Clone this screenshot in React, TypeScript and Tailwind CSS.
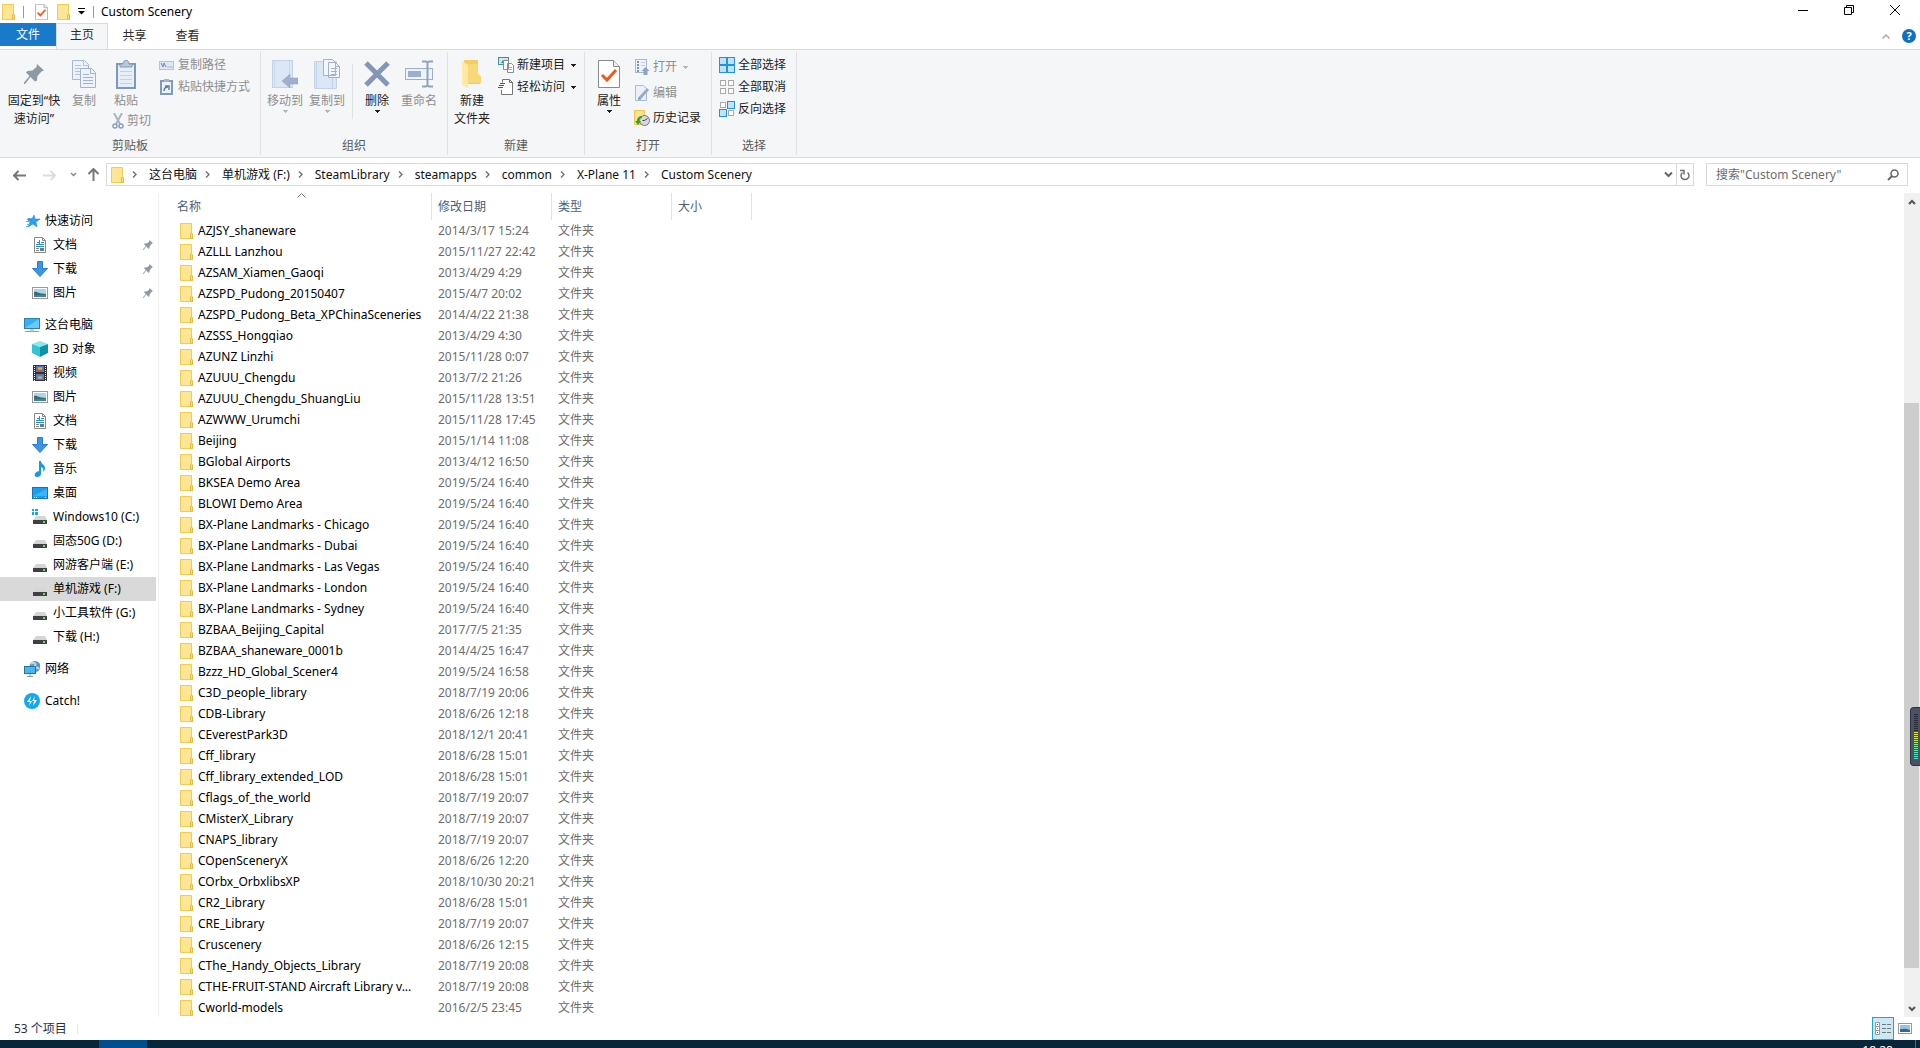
import React, { useState } from 'react';

type IconProps = { className?: string };

const rows: [string, string][] = [
  ['AZJSY_shaneware', '2014/3/17 15:24'],
  ['AZLLL Lanzhou', '2015/11/27 22:42'],
  ['AZSAM_Xiamen_Gaoqi', '2013/4/29 4:29'],
  ['AZSPD_Pudong_20150407', '2015/4/7 20:02'],
  ['AZSPD_Pudong_Beta_XPChinaSceneries', '2014/4/22 21:38'],
  ['AZSSS_Hongqiao', '2013/4/29 4:30'],
  ['AZUNZ Linzhi', '2015/11/28 0:07'],
  ['AZUUU_Chengdu', '2013/7/2 21:26'],
  ['AZUUU_Chengdu_ShuangLiu', '2015/11/28 13:51'],
  ['AZWWW_Urumchi', '2015/11/28 17:45'],
  ['Beijing', '2015/1/14 11:08'],
  ['BGlobal Airports', '2013/4/12 16:50'],
  ['BKSEA Demo Area', '2019/5/24 16:40'],
  ['BLOWI Demo Area', '2019/5/24 16:40'],
  ['BX-Plane Landmarks - Chicago', '2019/5/24 16:40'],
  ['BX-Plane Landmarks - Dubai', '2019/5/24 16:40'],
  ['BX-Plane Landmarks - Las Vegas', '2019/5/24 16:40'],
  ['BX-Plane Landmarks - London', '2019/5/24 16:40'],
  ['BX-Plane Landmarks - Sydney', '2019/5/24 16:40'],
  ['BZBAA_Beijing_Capital', '2017/7/5 21:35'],
  ['BZBAA_shaneware_0001b', '2014/4/25 16:47'],
  ['Bzzz_HD_Global_Scener4', '2019/5/24 16:58'],
  ['C3D_people_library', '2018/7/19 20:06'],
  ['CDB-Library', '2018/6/26 12:18'],
  ['CEverestPark3D', '2018/12/1 20:41'],
  ['Cff_library', '2018/6/28 15:01'],
  ['Cff_library_extended_LOD', '2018/6/28 15:01'],
  ['Cflags_of_the_world', '2018/7/19 20:07'],
  ['CMisterX_Library', '2018/7/19 20:07'],
  ['CNAPS_library', '2018/7/19 20:07'],
  ['COpenSceneryX', '2018/6/26 12:20'],
  ['COrbx_OrbxlibsXP', '2018/10/30 20:21'],
  ['CR2_Library', '2018/6/28 15:01'],
  ['CRE_Library', '2018/7/19 20:07'],
  ['Cruscenery', '2018/6/26 12:15'],
  ['CThe_Handy_Objects_Library', '2018/7/19 20:08'],
  ['CTHE-FRUIT-STAND Aircraft Library v...', '2018/7/19 20:08'],
  ['Cworld-models', '2016/2/5 23:45'],
];

const crumbs = ['这台电脑', '单机游戏 (F:)', 'SteamLibrary', 'steamapps', 'common', 'X-Plane 11', 'Custom Scenery'];

const Svg: React.FC<{ w: number; h: number; className?: string; children: React.ReactNode }> = ({ w, h, className = '', children }) => (
  <svg width={w} height={h} viewBox={`0 0 ${w} ${h}`} fill="none" className={`shrink-0 ${className}`} aria-hidden="true">
    {children}
  </svg>
);

const Folder = ({ className }: IconProps) => (
  <Svg w={13} h={16} className={className}>
    <path d="M.5.5h11v10l1 1v4H.5z" fill="#ffe694" stroke="#f2cb4f" />
    <path d="M10.5 15V11l1-1 1 1v4.5z" fill="#ffe08a" stroke="#e6b93c" />
  </Svg>
);

const Caret = ({ className = 'text-[#222]' }: IconProps) => (
  <Svg w={5} h={3} className={className}>
    <path d="M0 0h5v1H4v1H3v1H2V2H1V1H0z" fill="currentColor" />
  </Svg>
);

const CrumbArrow = () => (
  <Svg w={5} h={7}>
    <path d="M1 .5l3 3-3 3" stroke="#777" strokeWidth="1.5" />
  </Svg>
);

const Pin = ({ w }: { w: number }) => (
  <svg width={w} height={w} viewBox="0 0 20 20" className="shrink-0" aria-hidden="true">
    <path d="M13 0l7 6.5-2.5 1-4 4.5-.5 4.5-2 1-4.500-4.500L1 20H0v-1.500L5.500 12 2 8.500l1.500-1.500 5-.5L12.500 3z" fill="#8d9aa3" />
  </svg>
);

const CheckDoc = ({ w, h }: { w: number; h: number }) => (
  <svg width={w} height={h} viewBox="0 0 22 28" className="shrink-0" aria-hidden="true">
    <path d="M.5.5h15l6 6v21H.5z" fill="#fff" stroke="#8a8a8a" />
    <path d="M15.5.5v6h6" fill="#eee" stroke="#8a8a8a" />
    <path d="M4 15l5 5 9-10" fill="none" stroke="#f05a1e" strokeWidth="3" />
  </svg>
);

const CopyIcon = () => (
  <Svg w={24} h={28}>
    <path d="M.5.5h12l4 4v15H.5z" fill="#edf2fa" stroke="#a9b8cf" />
    <path d="M11.5.5v5h5M3 5.5h6M3 8.5h10M3 11.5h10M3 14.5h10" stroke="#b5c3d8" />
    <path d="M8.5 8.5h11l4 4v15h-15z" fill="#edf2fa" stroke="#a2b3cb" />
    <path d="M18.5 8.5v5h5M11 14.5h6M11 17.5h10M11 20.5h10M11 23.5h10" stroke="#a2b3cb" />
  </Svg>
);

const PasteIcon = () => (
  <Svg w={20} h={29}>
    <rect x="1" y="4" width="18" height="24" fill="#e6eef8" stroke="#7f97bd" strokeWidth="2" />
    <path d="M4 7V4h3c0-5 6-5 6 0h3v3z" fill="#bac7da" stroke="#8399ba" />
    <path d="M4 11.5h12M4 15.5h12M4 19.5h12M4 23.5h12" stroke="#c3d1e5" />
  </Svg>
);

const ScissorsIcon = () => (
  <Svg w={12} h={16}>
    <path d="M2 0l6 11M10 0L4 11" stroke="#a9b5c5" strokeWidth="2" />
    <circle cx="3" cy="13" r="2" stroke="#879dc1" strokeWidth="1.5" />
    <circle cx="9" cy="13" r="2" stroke="#879dc1" strokeWidth="1.5" />
  </Svg>
);

const PathIcon = () => (
  <Svg w={16} h={16}>
    <rect x=".5" y="4.5" width="14" height="8" fill="#dde7f5" stroke="#b5c4dc" />
    <path d="M2 6l2 4 1-4 2 4M8.5 10h1M10.5 10h1M12.5 10h1" stroke="#6f87ad" />
  </Svg>
);

const ShortcutIcon = () => (
  <Svg w={16} h={16}>
    <rect x="2" y="2" width="11" height="13" fill="#eef3fa" stroke="#8299bf" strokeWidth="2" />
    <rect x="5" y="0" width="5" height="3" fill="#a6b4cc" />
    <path d="M5 12c0-3 1-4 4-4M6 7h4v4" stroke="#5d7eae" strokeWidth="1.5" />
  </Svg>
);

const MoveIcon = () => (
  <Svg w={26} h={29}>
    <rect x=".5" y=".5" width="20" height="27" fill="#dce7f5" stroke="#c3d2e7" />
    <path d="M2.5 1v26M17.5 1v26" stroke="#cbd9ec" />
    <path d="M10 21l8-7v4h8v6h-8v4z" fill="#9fb0cc" stroke="#8ea1c0" strokeWidth=".5" />
  </Svg>
);

const CopyToIcon = () => (
  <Svg w={26} h={30}>
    <path d="M.5 2.5h22v27H.5z" fill="#dce7f5" stroke="#c3d2e7" />
    <path d="M2.5 3v26M18.5 18v11" stroke="#c3d2e7" />
    <path d="M9.5.5h9l3 3v13h-12zM14.5 3.5h7l4 4v11h-11z" fill="#f2f6fb" stroke="#a2b3cb" />
    <path d="M17 9.5h6M17 12.5h6M17 15.5h6M21.5 3.5v4h4" stroke="#a2b3cb" />
  </Svg>
);

const DeleteIcon = () => (
  <Svg w={26} h={28}>
    <path d="M2 3l22 22M24 3L2 25" stroke="#8496b5" strokeWidth="5" />
  </Svg>
);

const RenameIcon = () => (
  <Svg w={28} h={28}>
    <rect x=".5" y="8.5" width="27" height="11" fill="#edf3fb" stroke="#9caecb" />
    <rect x="3" y="11" width="13" height="6" fill="#9caecb" />
    <path d="M17 1.5h4l1.5 1 1.5-1h4M17 26.5h4l1.5-1 1.5 1h4M22.5 2v24" stroke="#8fa2c2" strokeWidth="2" />
  </Svg>
);

const NewFolderIcon = () => (
  <Svg w={20} h={28}>
    <path d="M2 0h14v14l2 2v8H2z" fill="#f3cd67" />
    <path d="M0 1l6 4v23l-6-3z" fill="#ffe9a4" />
    <path d="M6 4h10v10l3 2v7H6z" fill="#f8d878" />
  </Svg>
);

const NewItemIcon = () => (
  <Svg w={16} h={16}>
    <rect x=".5" y=".5" width="10" height="7" fill="#cfe7ef" stroke="#3d8fae" />
    <path d="M3 6l2-3 2 3" fill="#3f8f6b" />
    <path d="M5.5 3.5h5v9h-5zM9.5 6.5h4l2 2v7h-6z" fill="#fff" stroke="#8b8b8b" />
    <path d="M11 10.5h3M11 12.5h3" stroke="#9db8dd" />
  </Svg>
);

const EasyAccessIcon = () => (
  <Svg w={16} h={16}>
    <path d="M3.5 15.500h11v-12l-3-3h-7v3M3.500 11v4.500" fill="#fff" stroke="#777" />
    <path d="M11.5.5v3h3" stroke="#777" />
    <path d="M2 4.5h5M1 6.5h5M0 8.5h5" stroke="#1b66b5" />
  </Svg>
);

const OpenIcon = () => (
  <Svg w={16} h={16}>
    <rect x="1.5" y=".5" width="11" height="13" fill="#eef3fa" stroke="#a6b7d1" />
    <path d="M3 3h2M3 6h2M3 9h2M3 12h2" stroke="#7c93b8" strokeWidth="2" />
    <path d="M7 3.5h4M7 6.5h4" stroke="#c0cde0" />
    <path d="M11.5 8l4 4h-2v4h-4v-4h-2z" fill="#8ea2c3" />
  </Svg>
);

const EditIcon = () => (
  <Svg w={16} h={16}>
    <path d="M1.5.5h8l3 3v12h-11z" fill="#eaf1fa" stroke="#a9bbd5" />
    <path d="M14 4L5 14" stroke="#9aaccb" strokeWidth="3" />
    <path d="M5 12l-1 3 3-1" fill="#7c93b8" />
  </Svg>
);

const HistoryIcon = () => (
  <Svg w={16} h={16}>
    <path d="M.5.5h10v14H.5z" fill="#ffe28a" stroke="#f0c850" />
    <circle cx="10.5" cy="10.5" r="5" fill="#d9d9d9" stroke="#777" />
    <path d="M10.5 10.5l3-2M10.5 10.5h-2" stroke="#444" />
    <path d="M8 6c-3 0-5 2-5 5H1l3 4 3-4H5c0-2 1-3 3-3z" fill="#2ba52b" />
  </Svg>
);

// on: which of the four tiles are highlighted
const TilesIcon = ({ on }: { on: boolean[] }) => (
  <Svg w={16} h={16}>
    {on.map((v, i) => {
      const x = (i % 2) * 8;
      const y = Math.floor(i / 2) * 8;
      return v ? (
        <rect key={i} x={x + 0.5} y={y + 0.5} width="7" height="7" fill="#bfe3fb" stroke="#2493df" />
      ) : (
        <rect key={i} x={x + 1.5} y={y + 1.5} width="5" height="5" fill="#fff" stroke="#a9a9a9" />
      );
    })}
  </Svg>
);

const StarIcon = () => (
  <Svg w={16} h={16}>
    <path d="M10 2l1 4h5l-4 3 1 5-4-3-5 3 2-5-3-3h5z" fill="#27a0ee" stroke="#1b7fc6" strokeWidth=".5" />
    <path d="M4 5.5h4M2 8.5h4M3 11.5h3M2 13.5h3" stroke="#4fb4f2" />
  </Svg>
);

const DocIcon = () => (
  <Svg w={16} h={16}>
    <path d="M2.5.5h8l3 3v12h-11z" fill="#fff" stroke="#888" />
    <path d="M10.5.5v3h3" stroke="#888" />
    <path d="M5 5.5h2M7.5 3v4M9 5.5h3M4 7.5h8M4 9.5h8" stroke="#2a8fd0" />
    <path d="M4 11.5h3M4 13.5h3" stroke="#888" />
    <rect x="8" y="11" width="4" height="3" fill="#5a7f8f" />
  </Svg>
);

const DownIcon = () => (
  <Svg w={16} h={16}>
    <path d="M5.5.5h5v7h5L8 15.5.5 7.5h5z" fill="#3c96e6" stroke="#2b7cc6" />
  </Svg>
);

const PictureIcon = () => (
  <Svg w={16} h={16}>
    <rect x=".5" y="2.5" width="15" height="11" fill="#fff" stroke="#999" />
    <rect x="2" y="4" width="12" height="8" fill="#a9d5f3" />
    <path d="M2 7c3-1 4 2 12 2v1H2z" fill="#3c6b66" />
    <rect x="2" y="10" width="12" height="2" fill="#4680a8" />
  </Svg>
);

const PcIcon = () => (
  <Svg w={16} h={16}>
    <rect x=".5" y="1.5" width="15" height="10" fill="#35b0f8" stroke="#2d7fae" />
    <path d="M1 11L15 2v9z" fill="#69c8fc" />
    <path d="M6 13h4M1 14.5h14" stroke="#8ca3b0" />
  </Svg>
);

const CubeIcon = () => (
  <Svg w={16} h={16}>
    <path d="M0 3l8-3 8 3-8 3z" fill="#8fe6ee" />
    <path d="M0 3l8 3v10l-8-4z" fill="#35c3d6" />
    <path d="M16 3L8 6v10l8-4z" fill="#0c93a8" />
  </Svg>
);

const VideoIcon = () => (
  <Svg w={16} h={16}>
    <rect x="1" y="0" width="14" height="16" fill="#333" />
    <rect x="4" y="1" width="8" height="6" fill="#5a78c0" />
    <rect x="4" y="9" width="8" height="6" fill="#5a78c0" />
    <path d="M6 3.5h4M6 12.5h4" stroke="#f0b52a" strokeWidth="2" />
    <path d="M5 5.5h5M7 14.5h4" stroke="#d14a3a" />
    <path d="M2.5 1v15M13.5 1v15" stroke="#fff" strokeDasharray="1 1" />
  </Svg>
);

const MusicIcon = () => (
  <Svg w={16} h={16}>
    <path d="M7 0h2c0 3 4 4 4 7 0 2-1 3-2 4 1-3 0-4-2-5v7c0 2-2 3-4 3s-3-2-2-3.500S6 10 7 10z" fill="#149ae8" />
  </Svg>
);

const DesktopIcon = () => (
  <Svg w={16} h={16}>
    <rect x=".5" y="2.5" width="15" height="11" fill="#189ff2" stroke="#1475bb" />
    <path d="M1 11L15 4v7z" fill="#3fb2f8" />
    <path d="M2 12.5h1M4 12.5h1M13 12.5h1" stroke="#fff" />
  </Svg>
);

const DriveIcon = ({ win = false }: { win?: boolean }) => (
  <Svg w={16} h={16}>
    {win && <path d="M0 0h2v2H0zM3 0h3v2H3zM0 3h2v3H0zM3 3h3v3H3z" fill="#14a8e6" />}
    <path d="M4 7h9l2 4H1z" fill="#d5d5d8" />
    <rect x="1" y="11" width="14" height="4" fill="#404043" />
    <rect x="11" y="12" width="2" height="2" fill="#5ee05e" />
  </Svg>
);

const NetworkIcon = () => (
  <Svg w={16} h={16}>
    <circle cx="11" cy="5.5" r="5.5" fill="#6296b4" />
    <path d="M7 3c3-3 5 0 4 2s3 1 4 3" stroke="#b8dced" strokeWidth="2" />
    <rect x=".5" y="5.5" width="11" height="7" fill="#4ab5f5" stroke="#24759f" />
    <path d="M6 13v2M3 15.5h6" stroke="#7e98a6" />
  </Svg>
);

const CatchIcon = () => (
  <Svg w={16} h={16}>
    <circle cx="8" cy="8" r="8" fill="#10a9ef" />
    <path d="M7 3L3 9h3l-1 4 3-5H6zM11 3L8 8h2l-1 5 4-6h-3z" fill="#fff" />
  </Svg>
);

type NavItem = { label: string; icon: React.ReactNode; root?: boolean; pinned?: boolean; active?: boolean };

const navGroups: NavItem[][] = [
  [
    { label: '快速访问', icon: <StarIcon />, root: true },
    { label: '文档', icon: <DocIcon />, pinned: true },
    { label: '下载', icon: <DownIcon />, pinned: true },
    { label: '图片', icon: <PictureIcon />, pinned: true },
  ],
  [
    { label: '这台电脑', icon: <PcIcon />, root: true },
    { label: '3D 对象', icon: <CubeIcon /> },
    { label: '视频', icon: <VideoIcon /> },
    { label: '图片', icon: <PictureIcon /> },
    { label: '文档', icon: <DocIcon /> },
    { label: '下载', icon: <DownIcon /> },
    { label: '音乐', icon: <MusicIcon /> },
    { label: '桌面', icon: <DesktopIcon /> },
    { label: 'Windows10 (C:)', icon: <DriveIcon win /> },
    { label: '固态50G (D:)', icon: <DriveIcon /> },
    { label: '网游客户端 (E:)', icon: <DriveIcon /> },
    { label: '单机游戏 (F:)', icon: <DriveIcon />, active: true },
    { label: '小工具软件 (G:)', icon: <DriveIcon /> },
    { label: '下载 (H:)', icon: <DriveIcon /> },
  ],
  [{ label: '网络', icon: <NetworkIcon />, root: true }],
  [{ label: 'Catch!', icon: <CatchIcon />, root: true }],
];

const Group: React.FC<{ label: string; className: string; children: React.ReactNode }> = ({ label, className, children }) => (
  <section className={`my-0.5 flex flex-col border-r border-[#dfe1e4] ${className}`} aria-label={label}>
    <div className="flex flex-1 items-start pt-0.5">{children}</div>
    <div className="h-[18px] text-center leading-[18px] text-[#5a5a5a]">{label}</div>
  </section>
);

type BigProps = { icon: React.ReactNode; label: string; second?: string; className: string; disabled?: boolean; caret?: boolean };

const BigButton: React.FC<BigProps> = ({ icon, label, second, className, disabled, caret }) => (
  <button disabled={disabled} className={`flex shrink-0 flex-col items-center whitespace-nowrap pt-0.5 leading-[18px] ${disabled ? 'text-[#8e8e8e]' : 'text-[#222]'} ${className}`}>
    <span className="flex h-9 items-center">{icon}</span>
    <span>{label}</span>
    {second && <span>{second}</span>}
    {caret && <Caret className={disabled ? 'text-[#b5b5b5]' : 'text-[#222]'} />}
  </button>
);

const SmallButton: React.FC<{ icon: React.ReactNode; label: string; disabled?: boolean; caret?: boolean; className?: string }> = ({ icon, label, disabled, caret, className = 'h-[22px]' }) => (
  <button disabled={disabled} className={`flex items-center whitespace-nowrap ${disabled ? 'text-[#8e8e8e]' : 'text-[#222]'} ${className}`}>
    {icon}
    <span className="ml-[3px] mr-1.5">{label}</span>
    {caret && <Caret className={disabled ? 'text-[#b5b5b5]' : 'text-[#222]'} />}
  </button>
);

const Ribbon = () => (
  <div className="flex h-[109px] shrink-0 border-y border-[#d9dbde] bg-[#f4f6f8]">
    <Group label="剪贴板" className="w-[261px]">
      <BigButton icon={<Pin w={20} />} label="固定到“快" second="速访问”" className="w-[68px]" />
      <BigButton icon={<CopyIcon />} label="复制" disabled className="w-8" />
      <div className="ml-2 flex flex-col">
        <div className="flex">
          <BigButton icon={<PasteIcon />} label="粘贴" disabled className="w-9" />
          <div className="ml-[15px] flex flex-col">
            <SmallButton icon={<PathIcon />} label="复制路径" disabled />
            <SmallButton icon={<ShortcutIcon />} label="粘贴快捷方式" disabled />
          </div>
        </div>
        <SmallButton icon={<ScissorsIcon />} label="剪切" disabled className="ml-1 h-[22px]" />
      </div>
    </Group>
    <Group label="组织" className="w-[187px]">
      <BigButton icon={<MoveIcon />} label="移动到" disabled caret className="ml-[3px] w-[42px]" />
      <BigButton icon={<CopyToIcon />} label="复制到" disabled caret className="w-[42px]" />
      <div className="ml-1 mt-2.5 h-[55px] w-px bg-[#dfe1e4]" />
      <BigButton icon={<DeleteIcon />} label="删除" caret className="ml-1 w-[40px]" />
      <BigButton icon={<RenameIcon />} label="重命名" disabled className="w-[44px]" />
    </Group>
    <Group label="新建" className="w-[137px]">
      <BigButton icon={<NewFolderIcon />} label="新建" second="文件夹" className="ml-1 w-[40px]" />
      <div className="ml-1.5 flex flex-col">
        <SmallButton icon={<NewItemIcon />} label="新建项目" caret />
        <SmallButton icon={<EasyAccessIcon />} label="轻松访问" caret />
      </div>
    </Group>
    <Group label="打开" className="w-[127px]">
      <BigButton icon={<CheckDoc w={22} h={28} />} label="属性" caret className="ml-[3px] w-[42px]" />
      <div className="ml-1 flex flex-col">
        <SmallButton icon={<OpenIcon />} label="打开" disabled caret className="h-[26px]" />
        <SmallButton icon={<EditIcon />} label="编辑" disabled className="h-[26px]" />
        <SmallButton icon={<HistoryIcon />} label="历史记录" className="h-[24px]" />
      </div>
    </Group>
    <Group label="选择" className="w-[85px]">
      <div className="ml-[7px] flex flex-col">
        <SmallButton icon={<TilesIcon on={[true, true, true, true]} />} label="全部选择" />
        <SmallButton icon={<TilesIcon on={[false, false, false, false]} />} label="全部取消" />
        <SmallButton icon={<TilesIcon on={[false, true, true, false]} />} label="反向选择" />
      </div>
    </Group>
  </div>
);

const TitleBar = () => (
  <header className="flex h-[23px] shrink-0 items-center pr-0.5">
    <div className="flex flex-1 items-center pl-0.5">
      <Folder />
      <span className="ml-2 h-3 w-px bg-[#999]" />
      <button aria-label="属性" className="ml-[11px]"><CheckDoc w={13} h={16} /></button>
      <button aria-label="新建文件夹" className="ml-[9px]"><Folder /></button>
      <button aria-label="自定义快速访问工具栏" className="ml-2">
        <Svg w={7} h={7}>
          <path d="M0 .5h7" stroke="#000" />
          <path d="M0 3h7L3.5 6.5z" fill="#000" />
        </Svg>
      </button>
      <span className="ml-2 h-3 w-px bg-[#999]" />
      <h1 className="ml-[7px]">Custom Scenery</h1>
    </div>
    <button aria-label="最小化" className="flex w-[46px] justify-center pb-1">
      <Svg w={10} h={10}><path d="M0 5.5h10" stroke="#000" /></Svg>
    </button>
    <button aria-label="还原" className="flex w-[46px] justify-center pb-1">
      <Svg w={10} h={10}><path d="M.5 2.5h7v7h-7zM2.5 2V.5h7v7H8" stroke="#000" /></Svg>
    </button>
    <button aria-label="关闭" className="flex w-[46px] justify-center pb-1">
      <Svg w={10} h={10}><path d="M0 0l10 10M10 0L0 10" stroke="#000" /></Svg>
    </button>
  </header>
);

const tabs = ['共享', '查看'];

const Tabs = () => (
  <div className="flex h-[26px] shrink-0 items-start">
    <button className="h-[23px] w-14 bg-[#1979ca] text-white">文件</button>
    <button className="-mb-px h-[27px] w-[52px] border border-b-0 border-[#d9dbde] bg-[#f4f6f8] pb-1 text-[#2b2b2b]">主页</button>
    {tabs.map((t) => (
      <button key={t} className="h-[25px] w-[53px] text-[#2b2b2b]">{t}</button>
    ))}
    <div className="flex h-[26px] flex-1 items-center justify-end gap-3 pr-1">
      <button aria-label="最小化功能区">
        <Svg w={8} h={5}><path d="M.5 4.5L4 1l3.5 3.5" stroke="#aaa" strokeWidth="1.5" /></Svg>
      </button>
      <button aria-label="帮助" className="h-3.5 w-3.5 rounded-full bg-[#0f6fc6] text-[11px] font-bold leading-[14px] text-white">?</button>
    </div>
  </div>
);

const AddressBar = () => {
  const [query, setQuery] = useState('');
  return (
    <div className="flex h-9 shrink-0 items-start pr-3 pt-[5px]">
      <div className="flex h-[23px] w-[106px] items-center pl-[13px]">
        <button aria-label="后退" className="pt-0.5"><Svg w={13} h={11}><path d="M13 5.5H1M5.5 1L1 5.5 5.5 10" stroke="#777" strokeWidth="2" /></Svg></button>
        <button aria-label="前进" disabled className="ml-[17px] pt-0.5"><Svg w={13} h={11}><path d="M0 5.5h12M7.5 1L12 5.5 7.5 10" stroke="#ddd" strokeWidth="2" /></Svg></button>
        <button aria-label="最近浏览的位置" className="ml-3.5"><Svg w={7} h={5}><path d="M1 1l2.5 2.5L6 1" stroke="#888" strokeWidth="1.5" /></Svg></button>
        <button aria-label="向上" className="ml-2.5"><Svg w={13} h={13}><path d="M6.5 13V1M1.5 6l5-5 5 5" stroke="#777" strokeWidth="2" /></Svg></button>
      </div>
      <nav aria-label="地址" className="flex h-[23px] flex-1 items-center border border-[#d9d9d9] pl-1">
        <Folder />
        {crumbs.map((c) => (
          <span key={c} className="flex items-center">
            <span className="flex w-[25px] justify-center pr-1"><CrumbArrow /></span>
            <a href="#" className="whitespace-nowrap text-[#111]">{c}</a>
          </span>
        ))}
        <button aria-label="展开地址" className="ml-auto mr-[3px]"><Svg w={9} h={7}><path d="M1 1.5L4.5 5 8 1.5" stroke="#666" strokeWidth="2" /></Svg></button>
        <button aria-label="刷新" className="flex h-full w-[17px] items-center justify-center border-l border-[#d9d9d9]">
          <Svg w={10} h={12}><path d="M7.5 3.5a4 4 0 1 1-5 0M0 1.5h4v4" stroke="#707070" strokeWidth="1.5" /></Svg>
        </button>
      </nav>
      <label className="ml-3 flex h-[23px] w-[202px] items-center border border-[#d9d9d9] pl-[9px] pr-2">
        <input
          aria-label="搜索"
          value={query}
          onChange={(e) => setQuery(e.target.value)}
          placeholder='搜索"Custom Scenery"'
          className="min-w-0 flex-1 outline-none placeholder:text-[#6d6d6d]"
        />
        <Svg w={12} h={12}><circle cx="7.5" cy="4.5" r="3.5" stroke="#666" strokeWidth="1.5" /><path d="M5 7l-4 4" stroke="#666" strokeWidth="2" /></Svg>
      </label>
    </div>
  );
};

const Sidebar = () => (
  <nav aria-label="导航窗格" className="flex w-[159px] shrink-0 flex-col gap-2 overflow-hidden border-r border-[#f0f0f0] pt-4">
    {navGroups.map((group, i) => (
      <ul key={i} className="pr-0.5">
        {group.map((item) => (
          <li key={item.label}>
            <a href="#" className={`flex h-6 items-center gap-[5px] pr-[3px] text-black ${item.root ? 'pl-6' : 'pl-8'} ${item.active ? 'bg-[#d9d9d9]' : ''}`}>
              {item.icon}
              <span className="flex-1 whitespace-nowrap">{item.label}</span>
              {item.pinned && <Pin w={10} />}
            </a>
          </li>
        ))}
      </ul>
    ))}
  </nav>
);

const headCell = 'relative h-[27px] border-r border-[#e2e2e2] pl-1.5 text-left font-normal text-[#4c607a]';

const FileList = () => (
  <main className="min-w-0 flex-1 overflow-hidden">
    <table className="w-full table-fixed border-separate border-spacing-0">
      <colgroup>
        <col className="w-[273px]" />
        <col className="w-[120px]" />
        <col className="w-[120px]" />
        <col className="w-[80px]" />
        <col />
      </colgroup>
      <thead>
        <tr>
          <th className="relative h-[27px] border-r border-[#e2e2e2] pl-[18px] text-left font-normal text-[#4c607a]">
            名称
            <span className="absolute inset-x-0 top-0 flex justify-center pl-3">
              <Svg w={9} h={5}><path d="M.5 4.5l4-4 4 4" stroke="#777" /></Svg>
            </span>
          </th>
          <th className={headCell}>修改日期</th>
          <th className={headCell}>类型</th>
          <th className={headCell}>大小</th>
          <td />
        </tr>
      </thead>
      <tbody>
        {rows.map(([name, date]) => (
          <tr key={name}>
            <td className="h-[21px] pl-[21px]">
              <div className="flex items-center gap-[5px] whitespace-nowrap text-black">
                <Folder />
                {name}
              </div>
            </td>
            <td className="whitespace-nowrap pl-1.5 text-[#6d6d6d]">{date}</td>
            <td className="pl-1.5 text-[#6d6d6d]">文件夹</td>
            <td />
            <td />
          </tr>
        ))}
      </tbody>
    </table>
  </main>
);

const Scrollbar = () => (
  <div className="flex w-4 shrink-0 flex-col bg-[#f0f0f0]">
    <button aria-label="向上滚动" className="flex h-[17px] items-center justify-center">
      <Svg w={8} h={6}><path d="M1 5l3-3 3 3" stroke="#555" strokeWidth="2" /></Svg>
    </button>
    <div className="flex flex-1 flex-col">
      <div className="grow-[193]" />
      <div className="mr-px grow-[565] bg-[#cdcdcd]" />
      <div className="grow-[32]" />
    </div>
    <button aria-label="向下滚动" className="flex h-[17px] items-center justify-center">
      <Svg w={8} h={6}><path d="M1 1l3 3 3-3" stroke="#555" strokeWidth="2" /></Svg>
    </button>
  </div>
);

const meterColors = ['#f0d935', '#e6e03a', '#dce447', '#cce652', '#bce75d', '#a6e86b', '#91e87c', '#7ee88c', '#6de79c', '#60e7aa', '#55e5b7', '#4ce4c2', '#45e4cb', '#3fe3d3'];

// volume meter docked to the right edge of the screen
const Meter = () => (
  <div className="absolute right-0 top-[707px] flex h-[59px] w-2.5 flex-col rounded-l border border-r-0 border-[#2e3444] bg-[#4a5264] pl-[3px] pt-1.5">
    {Array.from({ length: 9 }, (_, i) => (
      <span key={i} className="mb-px h-px w-1 bg-[#272c38]" />
    ))}
    {meterColors.map((c) => (
      <span key={c} className="mb-px h-px w-1" style={{ background: c }} />
    ))}
  </div>
);

const StatusBar = () => (
  <footer className="flex h-[23px] shrink-0 items-center pl-3.5">
    <span className="text-[#1f2f4d]">53 个项目</span>
    <span className="ml-2.5 h-2.5 w-px bg-[#e8e8e8]" />
    <button aria-label="详细信息" className="ml-auto flex h-[23px] w-[22px] items-center justify-center border border-[#2a9fd6] bg-[#cbe8f6]">
      <Svg w={16} h={13}>
        <path d="M.5.5h4v12h-4zM0 4.5h5M0 8.5h5" fill="#fff" stroke="#999" />
        <path d="M7 2.5h4M12 2.5h4M7 6.5h4M12 6.5h4M7 10.5h4M12 10.5h4" stroke="#777" />
        <path d="M2 2.5h1" stroke="#555" /><path d="M2 6.5h1" stroke="#1b8fe0" /><path d="M2 10.5h1" stroke="#d03020" />
      </Svg>
    </button>
    <button aria-label="大图标" className="flex w-[26px] justify-center pr-1">
      <Svg w={14} h={11}>
        <rect x=".5" y=".5" width="13" height="10" fill="#fff" stroke="#999" />
        <rect x="2" y="2" width="10" height="7" fill="#8fc4f5" />
        <path d="M2 6c3 0 5-1 10 1v2H2z" fill="#3c6b66" />
      </Svg>
    </button>
  </footer>
);

const Taskbar = () => (
  <div className="flex h-2 shrink-0 items-start overflow-hidden bg-[#07263a]">
    <div className="ml-[99px] h-2 w-12 bg-[#004e8c]" />
    <time className="ml-auto mr-[22px] pt-[3px] leading-4 text-white">18:28</time>
    <div className="mr-1 h-2 w-px bg-[#51687a]" />
  </div>
);

const App: React.FC = () => {
  return (
    <div className="relative flex h-screen flex-col overflow-hidden bg-white font-['Noto_Sans','Noto_Sans_CJK_SC',sans-serif] text-[12px] leading-4 text-black">
      <TitleBar />
      <Tabs />
      <Ribbon />
      <AddressBar />
      <div className="-mt-px flex min-h-0 flex-1">
        <Sidebar />
        <FileList />
        <Scrollbar />
      </div>
      <StatusBar />
      <Taskbar />
      <Meter />
    </div>
  );
};

export default App;
